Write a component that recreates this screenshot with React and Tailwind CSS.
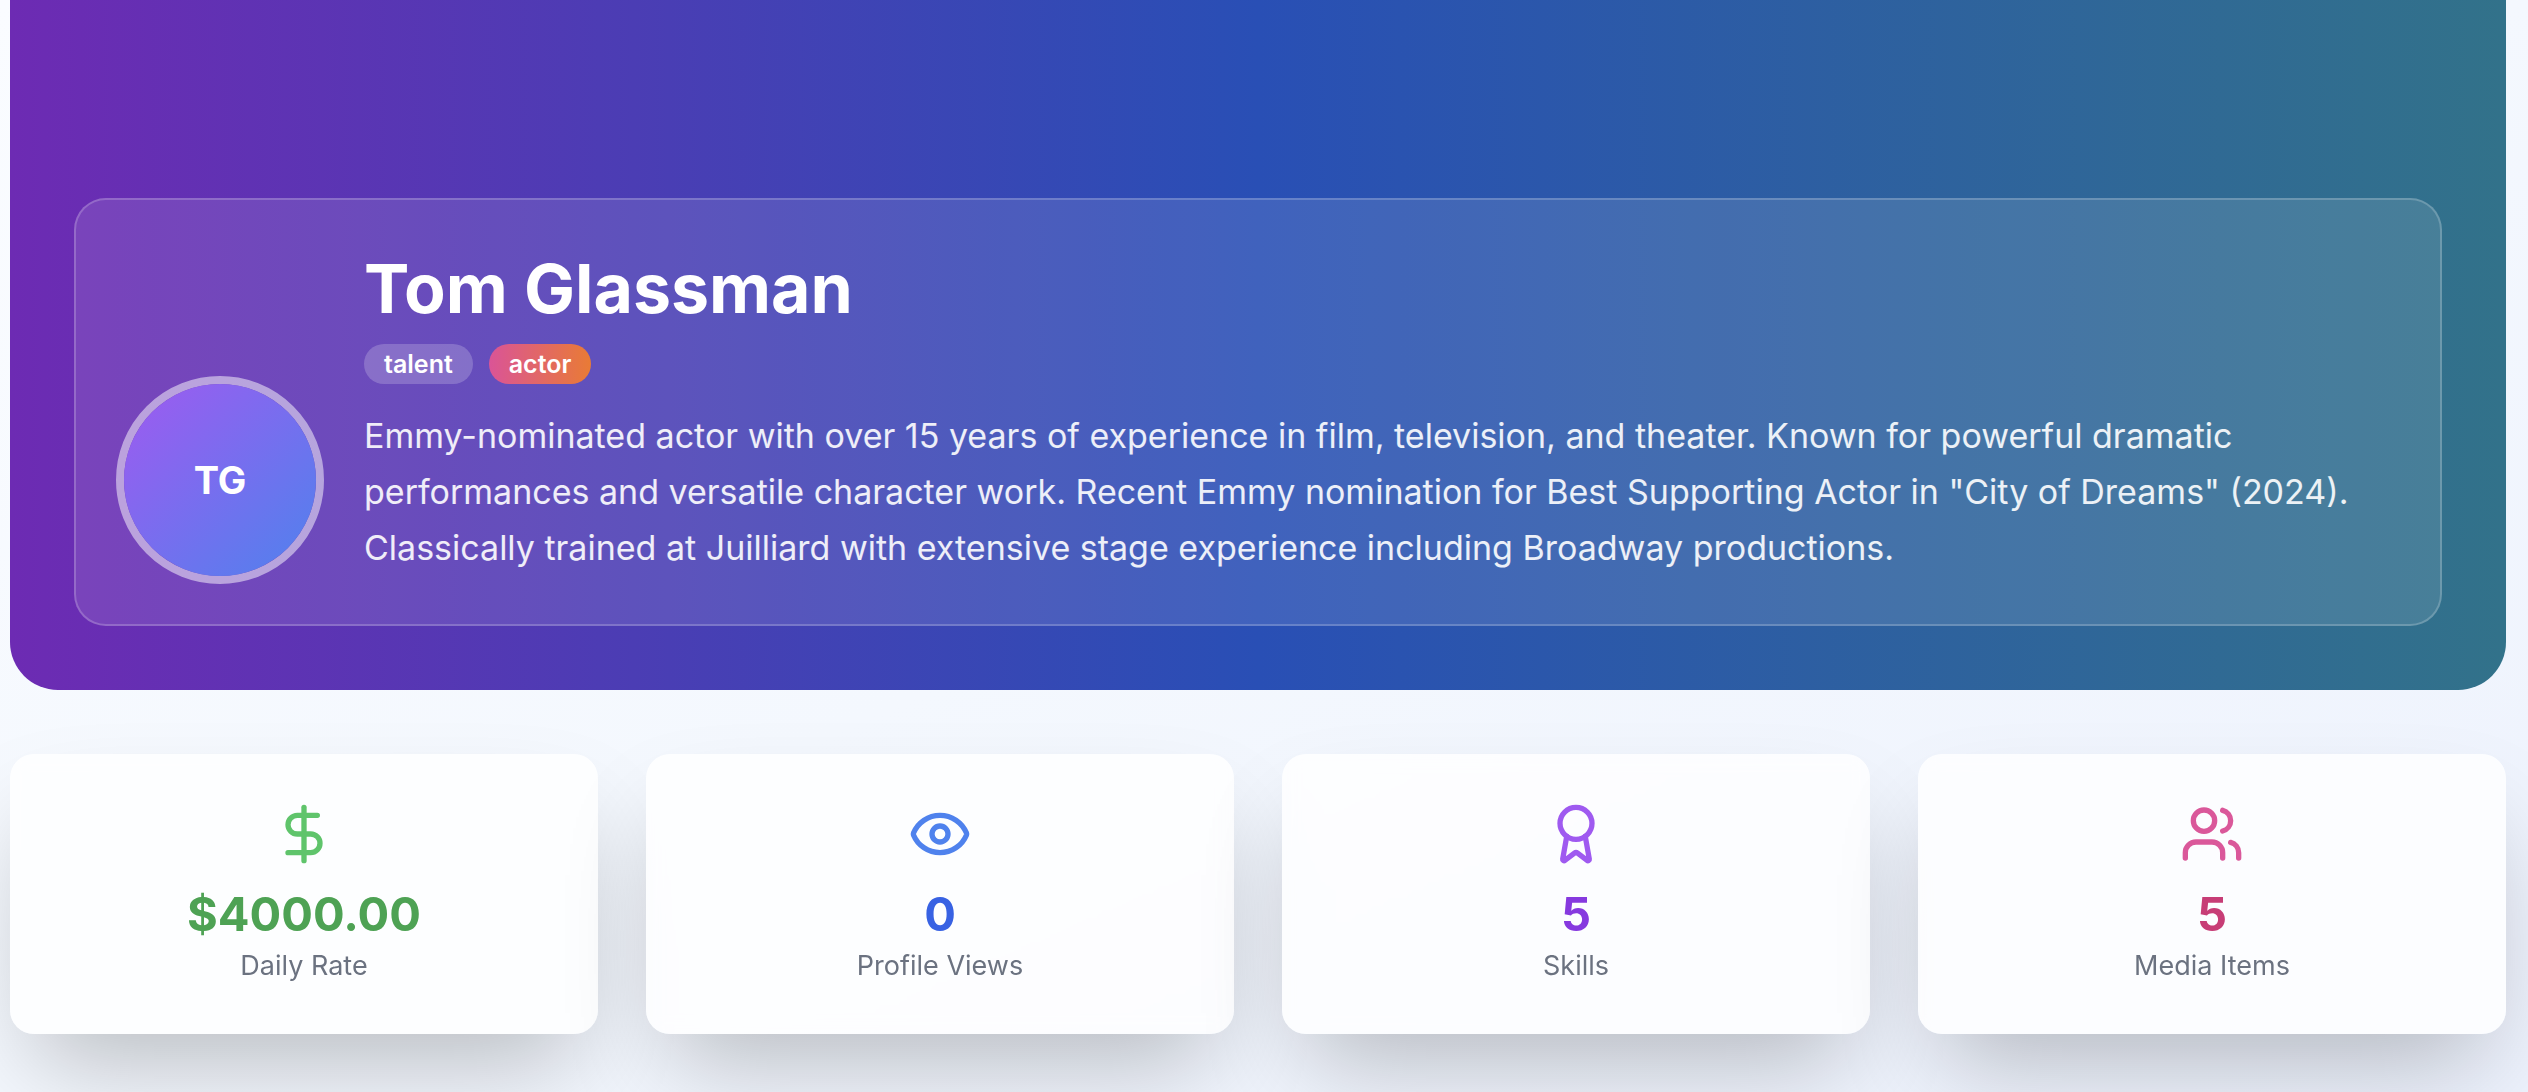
import { Award, DollarSign, Eye, Users } from "lucide-react";

const stats = [
  { icon: DollarSign, value: "$4000.00", label: "Daily Rate", iconColor: "text-[#5fc46b]", valueColor: "text-[#4ea254]" },
  { icon: Eye, value: "0", label: "Profile Views", iconColor: "text-[#4f82ed]", valueColor: "text-[#3862e3]" },
  { icon: Award, value: "5", label: "Skills", iconColor: "text-[#9f5af0]", valueColor: "text-[#8639df]" },
  { icon: Users, value: "5", label: "Media Items", iconColor: "text-[#da589a]", valueColor: "text-[#c73d76]" },
];

function ProfileHero() {
  return (
    <header className="rounded-b-[48px] bg-linear-to-r/srgb from-[#6d2bb3] via-[#294fb5] to-[#32728a] px-16 pt-[198px] pb-16">
      <div className="flex items-end gap-10 rounded-[32px] border-2 border-white/20 bg-white/11 p-10">
        <div className="size-52 shrink-0 rounded-full border-8 border-white/50">
          <div className="flex size-full items-center justify-center rounded-full bg-linear-to-br/srgb from-[#9f5af0] to-[#4f82ed] text-[38px] font-bold text-white">
            TG
          </div>
        </div>
        <div className="min-w-0 flex-1 py-2">
          <h1 className="mb-4 text-[68px] leading-[80px] font-bold text-white">Tom Glassman</h1>
          <div className="mb-6 flex gap-4">
            <span className="rounded-full bg-white/20 px-5 py-1 text-[25px] leading-8 font-semibold text-white">talent</span>
            <span className="rounded-full bg-linear-to-r/srgb from-[#da5497] to-[#e97b35] px-5 py-1 text-[25px] leading-8 font-semibold text-white">
              actor
            </span>
          </div>
          <p className="text-[34px] leading-[56px] text-white/90">
            Emmy-nominated actor with over 15 years of experience in film, television, and theater. Known for powerful dramatic
            performances and versatile character work. Recent Emmy nomination for Best Supporting Actor in "City of Dreams" (2024).
            Classically trained at Juilliard with extensive stage experience including Broadway productions.
          </p>
        </div>
      </div>
    </header>
  );
}

function StatCard({ icon: Icon, value, label, iconColor, valueColor }) {
  return (
    <div className="flex flex-col items-center rounded-3xl bg-white/80 p-12 text-center shadow-[0_50px_100px_-24px_rgba(0,0,0,0.25)] backdrop-blur-sm">
      <Icon className={`mb-4 size-16 ${iconColor}`} aria-hidden="true" />
      <div className={`text-[47px] leading-[64px] font-bold ${valueColor}`}>{value}</div>
      <div className="text-[27px] leading-10 text-[#6b7280]">{label}</div>
    </div>
  );
}

export default function App() {
  return (
    <div className="min-h-screen overflow-hidden bg-linear-to-br/srgb from-[#fafcff] via-[#f4f8fe] to-[#edf2fd] pr-[22px] pl-[10px] font-['Inter',sans-serif]">
      <ProfileHero />
      <section aria-label="Profile statistics" className="mt-16 grid grid-cols-4 gap-12 pb-14">
        {stats.map((stat) => (
          <StatCard key={stat.label} {...stat} />
        ))}
      </section>
    </div>
  );
}
